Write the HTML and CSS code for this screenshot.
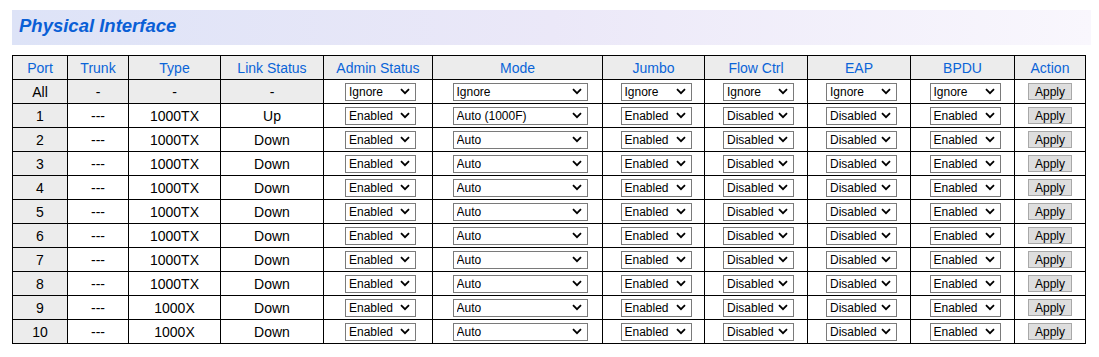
FILE: index.html
```html
<!DOCTYPE html>
<html>
    <head>
        <title>Physical Interface</title>
        <link rel="stylesheet" href="styles.css">
    </head>
    <body>
        <div class='title-bar'>Physical Interface</div>
        <table class='ports'>
            <colgroup>
                <col style="width: 55px">
                <col style="width: 61px">
                <col style="width: 92px">
                <col style="width: 103px">
                <col style="width: 109px">
                <col style="width: 170px">
                <col style="width: 102px">
                <col style="width: 103px">
                <col style="width: 103px">
                <col style="width: 104px">
                <col style="width: 71px">
            </colgroup>
            <thead>
                <tr>
                    <th>Port</th><th>Trunk</th><th>Type</th><th>Link Status</th><th>Admin Status</th>
                    <th>Mode</th><th>Jumbo</th><th>Flow Ctrl</th><th>EAP</th><th>BPDU</th><th>Action</th>
                </tr>
            </thead>
            <tbody id='rows'>
                <tr class='all-row'>
                    <td class='port'>All</td><td class='shade'>-</td><td class='shade'>-</td><td class='shade'>-</td>
                    <td><select class='sel-small'><option>Ignore</option></select></td>
                    <td><select class='sel-mode'><option>Ignore</option></select></td>
                    <td><select class='sel-small'><option>Ignore</option></select></td>
                    <td><select class='sel-small'><option>Ignore</option></select></td>
                    <td><select class='sel-small'><option>Ignore</option></select></td>
                    <td><select class='sel-small'><option>Ignore</option></select></td>
                    <td><button class='apply'>Apply</button></td>
                </tr>
            </tbody>
        </table>
        <script>
            var ports = [
                ['1', '1000TX', 'Up', 'Auto (1000F)'],
                ['2', '1000TX', 'Down', 'Auto'],
                ['3', '1000TX', 'Down', 'Auto'],
                ['4', '1000TX', 'Down', 'Auto'],
                ['5', '1000TX', 'Down', 'Auto'],
                ['6', '1000TX', 'Down', 'Auto'],
                ['7', '1000TX', 'Down', 'Auto'],
                ['8', '1000TX', 'Down', 'Auto'],
                ['9', '1000X', 'Down', 'Auto'],
                ['10', '1000X', 'Down', 'Auto']
            ];
            var tbody = document.getElementById('rows');
            for (var i = 0; i < ports.length; i++) {
                var p = ports[i];
                var tr = document.createElement('tr');
                tr.innerHTML =
                    "<td class='port'>" + p[0] + "</td>" +
                    "<td>---</td>" +
                    "<td>" + p[1] + "</td>" +
                    "<td>" + p[2] + "</td>" +
                    "<td><select class='sel-small'><option>Enabled</option></select></td>" +
                    "<td><select class='sel-mode'><option>" + p[3] + "</option></select></td>" +
                    "<td><select class='sel-small'><option>Enabled</option></select></td>" +
                    "<td><select class='sel-small'><option>Disabled</option></select></td>" +
                    "<td><select class='sel-small'><option>Disabled</option></select></td>" +
                    "<td><select class='sel-small'><option>Enabled</option></select></td>" +
                    "<td><button class='apply'>Apply</button></td>";
                tbody.appendChild(tr);
            }
        </script>
    </body>
</html>
```
FILE: styles.css
```css
body {
    margin: 10px 8px 0 12px;
    font-family: "Liberation Sans", Arial, sans-serif;
    background: #fff;
}
.title-bar {
    height: 35px;
    line-height: 31px;
    padding-left: 7px;
    background: linear-gradient(to right, #dde3f7, #ebe8f8 50%, #f9f7fd);
    color: #0a5fd6;
    font-size: 18.5px;
    font-weight: bold;
    font-style: italic;
}
.ports {
    margin-top: 10px;
    width: 1074px;
    table-layout: fixed;
    border-collapse: collapse;
    border: 1px solid #000;
}
.ports th,
.ports td {
    border: 1px solid #000;
    height: 23px;
    padding: 0;
    text-align: center;
    font-size: 14px;
}
.ports th {
    background: #ececec;
    color: #0a64d8;
    font-weight: normal;
}
.ports td.port,
.ports td.shade {
    background: #ececec;
}
select {
    -webkit-appearance: none;
    appearance: none;
    height: 18px;
    margin-left: 5px;
    font-family: "Liberation Sans", Arial, sans-serif;
    font-size: 12px;
    border: 1px solid #7a7a7a;
    border-radius: 0;
    background: #fff url("data:image/svg+xml;utf8,<svg xmlns='http://www.w3.org/2000/svg' width='10' height='7'><path d='M1 1.2 L5 5.2 L9 1.2' fill='none' stroke='black' stroke-width='1.8'/></svg>") no-repeat right 5px center;
    color: #000;
    padding: 0 0 0 3px;
    vertical-align: middle;
}
.sel-small {
    width: 71px;
}
.sel-mode {
    width: 135px;
}
.apply {
    width: 44px;
    height: 17px;
    padding: 0;
    font-family: "Liberation Sans", Arial, sans-serif;
    font-size: 12px;
    background: #dedede;
    border: 1px solid #a8a8a8;
    border-radius: 0;
    vertical-align: middle;
}
```
